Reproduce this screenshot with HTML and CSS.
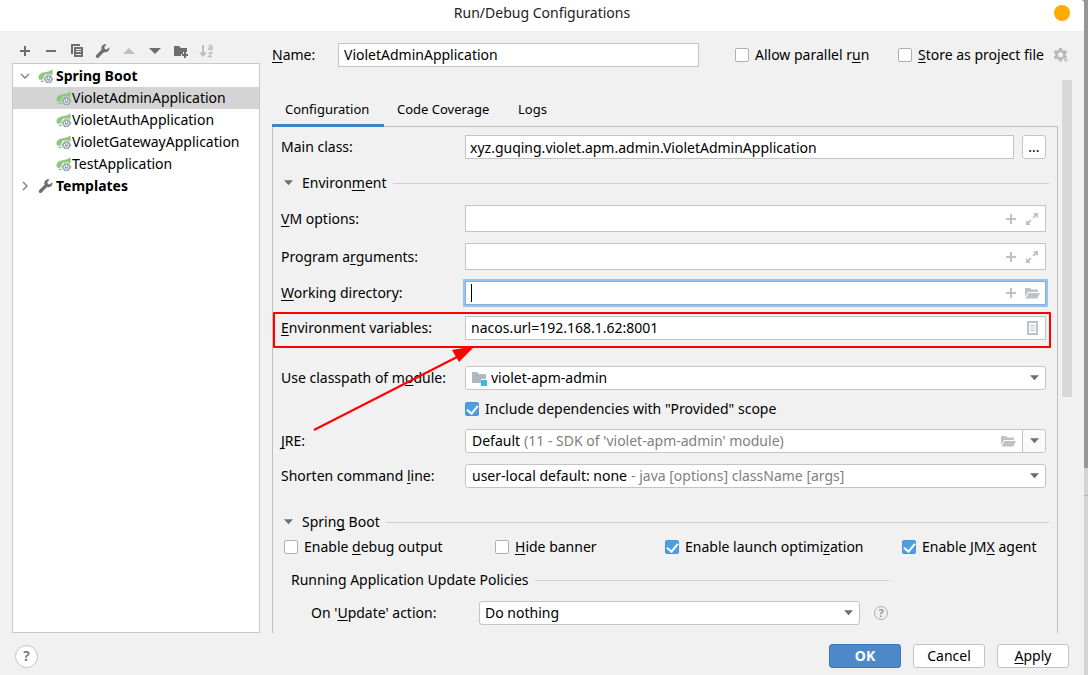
FILE: index.html
```html
<!DOCTYPE html>
<html lang="en">
<head>
<meta charset="utf-8">
<title>Run/Debug Configurations</title>
<link rel="stylesheet" href="styles.css">
</head>
<body>
<svg class="defs" aria-hidden="true">
  <symbol id="i-spring" viewBox="0 0 16 16">
    <path fill="#8cc97c" d="M14.200 1.300C12.800 3 11 3.600 8 3.900 4 4.300.8 5.800.5 9c-.1 1.300.5 2.200 1.200 2.700 1 .3 2.300.2 3-.4L7 6.600h5.800l1.200 1.500c.8-2 .9-4.500.2-6.800z"/>
    <path fill="#8cc97c" d="M2 13c1.200 0 2.200-.3 3-.8l1 1.900c-1.600.3-3 0-4-1.100z"/>
    <path fill="#9aa7b0" d="M8.300 7.200h4.300l2.900 3.900-2.900 3.900H8.300l-2.800-3.900z"/>
    <path d="M9 9.600a2.200 2.200 0 1 0 2.900 0" fill="none" stroke="#fff" stroke-width=".9"/>
    <path d="M10.450 8.600v2.500" stroke="#fff" stroke-width=".9"/>
  </symbol>
  <symbol id="i-wrench" viewBox="0 0 16 16">
    <path fill="#6e6e6e" d="M14.300 4.300l-2.500 2.200-2-.5-.5-2L11.600 1.500C9.800.9 8 1.500 7 2.900c-.8 1.200-.9 2.500-.4 3.800L1.300 12c-.8.800-.7 1.800 0 2.400.7.700 1.700.7 2.400 0L9 9c1.300.5 2.700.3 3.800-.5 1.400-1 2-2.600 1.500-4.200z"/>
  </symbol>
  <symbol id="i-plus" viewBox="0 0 16 16"><path d="M8 3v10M3 8h10" stroke="currentColor" stroke-width="2"/></symbol>
  <symbol id="i-expand" viewBox="0 0 16 16">
    <path fill="currentColor" d="M9 2h5v5l-1.800-1.800-2.400 2.400-1.400-1.400 2.400-2.400zM2 9l1.800 1.800 2.400-2.400 1.400 1.400-2.400 2.400L7 14H2z"/>
  </symbol>
  <symbol id="i-open" viewBox="0 0 16 16">
    <path fill="currentColor" d="M1 3h5l1.500 1.500H14V7H4.200L1 12z"/><path fill="currentColor" d="M4.600 8H16l-2.800 5.500H1.600z"/>
  </symbol>
  <symbol id="i-down" viewBox="0 0 10 6"><path fill="currentColor" d="M0 0h10L5 5.500z"/></symbol>
</svg>
<main class="window">
  <header class="titlebar">
    <h1 class="title">Run/Debug Configurations</h1>
    <button class="close" aria-label="Close"></button>
  </header>
  <div class="content">
    <aside class="sidebar">
      <div class="toolbar">
        <button class="tool" aria-label="Add"><svg viewBox="0 0 16 16"><path d="M8 3v10M3 8h10" stroke="#6e6e6e" stroke-width="2"/></svg></button>
        <button class="tool" aria-label="Remove"><svg viewBox="0 0 16 16"><path d="M3 8h10" stroke="#6e6e6e" stroke-width="2"/></svg></button>
        <button class="tool" aria-label="Copy"><svg viewBox="0 0 16 16"><path fill="#6e6e6e" d="M2 1h9v2H4v8H2z"/><path fill="#6e6e6e" fill-rule="evenodd" d="M5 4h9v10H5zm2 2v1h5V6zm0 2v1h5V8zm0 3v1h5v-1z"/></svg></button>
        <button class="tool" aria-label="Edit templates"><svg><use href="#i-wrench"/></svg></button>
        <button class="tool" aria-label="Move up" disabled><svg viewBox="0 0 16 16"><path fill="#bdbdbd" d="M2 11h12L8 5z"/></svg></button>
        <button class="tool" aria-label="Move down"><svg viewBox="0 0 16 16"><path fill="#6e6e6e" d="M2 5h12l-6 6z"/></svg></button>
        <button class="tool" aria-label="New folder"><svg viewBox="0 0 16 16"><path fill="#6e6e6e" d="M1 3h5l2 2h6v4h-4v2H8v2H1z"/><path d="M12 9v6M9 12h6" stroke="#6e6e6e" stroke-width="2"/></svg></button>
        <button class="tool" aria-label="Sort" disabled><svg viewBox="0 0 16 16"><path d="M4 2v10" stroke="#bdbdbd" stroke-width="2"/><path fill="#bdbdbd" d="M0 9.500h8L4 14z"/><path d="M9.500 3c1-.8 3.500-.8 3.500.8V7m0-2.500c-2 0-3.500.2-3.500 1.300S12.300 7 13 5.800M9.500 9.700h3.300l-3.300 4H13" fill="none" stroke="#bdbdbd" stroke-width="1.300"/></svg></button>
      </div>
      <ul class="tree">
        <li>
          <div class="node group"><svg class="chevron" viewBox="0 0 10 10"><path d="M1 3l4 4 4-4"/></svg><svg class="icon"><use href="#i-spring"/></svg><b>Spring Boot</b></div>
          <ul class="subtree">
            <li class="node leaf selected"><svg class="icon"><use href="#i-spring"/></svg><span>VioletAdminApplication</span></li>
            <li class="node leaf"><svg class="icon"><use href="#i-spring"/></svg><span>VioletAuthApplication</span></li>
            <li class="node leaf"><svg class="icon"><use href="#i-spring"/></svg><span>VioletGatewayApplication</span></li>
            <li class="node leaf"><svg class="icon"><use href="#i-spring"/></svg><span>TestApplication</span></li>
          </ul>
        </li>
        <li class="node group"><svg class="chevron" viewBox="0 0 10 10"><path d="M3 1l4 4-4 4"/></svg><svg class="icon"><use href="#i-wrench"/></svg><b>Templates</b></li>
      </ul>
    </aside>
    <section class="editor">
      <div class="namerow">
        <label class="namelabel" for="name"><u>N</u>ame:</label>
        <input class="field nameinput" id="name" type="text" value="VioletAdminApplication">
        <label class="check parallel"><input type="checkbox"><span>Allow parallel r<u>u</u>n</span></label>
        <label class="check store"><input type="checkbox"><span><u>S</u>tore as project file</span></label>
        <button class="gear" aria-label="Storage options"><svg viewBox="0 0 16 16"><path fill="#b9b9b9" fill-rule="evenodd" d="M6 1h3l.4 2 1.300.7 2-.7 1.500 2.600L12.700 7v1.500l1.500 1.400-1.500 2.600-2-.7-1.300.7L9 14.500H6l-.4-2-1.300-.7-2 .7L.8 9.900l1.500-1.400V7L.8 5.600 2.300 3l2 .7L5.600 3zm1.500 4.200a2.500 2.500 0 1 0 0 5 2.500 2.500 0 0 0 0-5z"/><path fill="#b9b9b9" stroke="#f1f1f1" stroke-width=".8" d="M9.500 12H16l-3.200 3.400z"/></svg></button>
      </div>
      <div class="body">
        <div class="pane">
          <div class="tabs" role="tablist">
            <button class="tab active" role="tab" aria-selected="true">Configuration</button>
            <button class="tab" role="tab">Code Coverage</button>
            <button class="tab" role="tab">Logs</button>
          </div>
          <div class="form">
            <div class="row">
              <label class="lbl" for="mainclass">Main class:</label>
              <input class="field grow mainclass" id="mainclass" type="text" value="xyz.guqing.violet.apm.admin.VioletAdminApplication">
              <button class="browse" aria-label="Browse for class">...</button>
            </div>
            <h2 class="section env"><svg class="fold"><use href="#i-down"/></svg><span>Environ<u>m</u>ent</span></h2>
            <div class="row">
              <label class="lbl" for="vm"><u>V</u>M options:</label>
              <div class="box tall"><input id="vm" type="text"><svg class="act"><use href="#i-plus"/></svg><svg class="act"><use href="#i-expand"/></svg></div>
            </div>
            <div class="row gap">
              <label class="lbl" for="args">Program a<u>r</u>guments:</label>
              <div class="box tall"><input id="args" type="text"><svg class="act"><use href="#i-plus"/></svg><svg class="act"><use href="#i-expand"/></svg></div>
            </div>
            <div class="row gap">
              <label class="lbl" for="dir"><u>W</u>orking directory:</label>
              <div class="box focused"><span class="caret"></span><input id="dir" type="text"><svg class="act"><use href="#i-plus"/></svg><svg class="act"><use href="#i-open"/></svg></div>
            </div>
            <div class="row gap marked">
              <label class="lbl" for="vars"><u>E</u>nvironment variables:</label>
              <div class="box"><input id="vars" type="text" value="nacos.url=192.168.1.62:8001"><svg class="act" viewBox="0 0 16 16"><path fill="currentColor" fill-rule="evenodd" d="M3 1h11v14H3zm2 2v10h7V3z"/><path d="M6 5.500h5M6 8h5M6 10.500h5" stroke="currentColor"/></svg></div>
              <svg class="arrow" viewBox="0 0 164 90"><path d="M1 86L146 12" stroke="#f00" stroke-width="2"/><path fill="#f00" d="M162 2l-23 4 7 12z"/></svg>
            </div>
            <div class="row module">
              <label class="lbl" for="module">Use classpath of m<u>o</u>dule:</label>
              <div class="box combo"><svg class="icon" viewBox="0 0 16 16"><path fill="#aeb9c0" d="M0 2h5l2 2h7v5H9v4H0z"/><path fill="#40b6e0" d="M9 10h6v6H9z"/></svg><select class="grow" id="module"><option>violet-apm-admin</option></select><svg class="drop"><use href="#i-down"/></svg></div>
            </div>
            <div class="row provided"><label class="check"><input type="checkbox" checked><span>Include dependencies with "Provided" scope</span></label></div>
            <div class="row jre">
              <label class="lbl" for="jre"><u>J</u>RE:</label>
              <div class="box combo"><select id="jre"><option>Default</option></select><span class="hint">(11 - SDK of 'violet-apm-admin' module)</span><svg class="act"><use href="#i-open"/></svg><button class="split" aria-label="Show list"><svg class="drop"><use href="#i-down"/></svg></button></div>
            </div>
            <div class="row gap">
              <label class="lbl" for="shorten">Shorten command <u>l</u>ine:</label>
              <div class="box combo"><select id="shorten"><option>user-local default: none</option></select><span class="hint">- java [options] className [args]</span><svg class="drop"><use href="#i-down"/></svg></div>
            </div>
            <h2 class="section boot"><svg class="fold"><use href="#i-down"/></svg><span>Sprin<u>g</u> Boot</span></h2>
            <div class="checks">
              <label class="check"><input type="checkbox"><span>Enable <u>d</u>ebug output</span></label>
              <label class="check"><input type="checkbox"><span><u>H</u>ide banner</span></label>
              <label class="check"><input type="checkbox" checked><span>Enable launch optimi<u>z</u>ation</span></label>
              <label class="check"><input type="checkbox" checked><span>Enable JM<u>X</u> agent</span></label>
            </div>
            <div class="policies">
              <h3 class="section">Running Application Update Policies</h3>
              <div class="row update">
                <label class="lbl" for="update">On '<u>U</u>pdate' action:</label>
                <div class="box combo"><select class="grow" id="update"><option>Do nothing</option></select><svg class="drop"><use href="#i-down"/></svg></div>
                <span class="tip">?</span>
              </div>
            </div>
          </div>
        </div>
        <div class="scroll"></div>
      </div>
    </section>
  </div>
  <footer class="footer">
    <button class="help" aria-label="Help">?</button>
    <button class="btn primary">OK</button>
    <button class="btn">Cancel</button>
    <button class="btn"><span><u>A</u>pply</span></button>
  </footer>
</main>
</body>
</html>
```
FILE: styles.css
```css
* { box-sizing: border-box; }
body {
  margin: 0;
  height: 100vh;
  overflow: hidden;
  font: 14px/22px "Noto Sans", "Open Sans", sans-serif;
  color: #000;
  background: linear-gradient(#979797 0 468px, #d4d4d4 468px 495px, #b8b8b8 495px 496px, #d4d4d4 496px);
}
button, input, select { font: inherit; color: inherit; margin: 0; padding: 0; border: 0; background: none; outline: 0; }
svg { display: block; flex: none; }
u { text-decoration-thickness: 1px; text-underline-offset: 2px; text-decoration-skip-ink: none; }
h1, h2, h3 { margin: 0; font-size: inherit; font-weight: normal; }
ul { list-style: none; margin: 0; padding: 0; }
.defs { position: absolute; width: 0; height: 0; }

.window {
  display: flex;
  flex-direction: column;
  height: 100%;
  margin-right: 4px;
  background: #f1f1f1;
  border-top-right-radius: 4px;
  overflow: hidden;
}
.titlebar { display: grid; grid-template-columns: 1fr auto 1fr; align-items: center; height: 31px; padding: 0 14px 5px 0; background: #fff; flex: none; }
.title { grid-column: 2; padding-left: 14px; color: #222; }
.close { justify-self: end; width: 16px; height: 16px; border-radius: 50%; background: #ffab00; }

.content { display: flex; gap: 12px; flex: 1; min-height: 0; padding-left: 12px; }
.sidebar { display: flex; flex-direction: column; width: 248px; flex: none; }
.toolbar { display: flex; gap: 10px; height: 32px; padding: 12px 0 0 5px; }
.tool, .tool svg { width: 16px; height: 16px; }
.tree { flex: 1; border: 1px solid #c9c9c9; background: #fff; padding-top: 1px; }
.node { display: flex; align-items: center; height: 22px; white-space: nowrap; }
.group { padding-left: 7px; }
.group .icon { margin: 0 2px 0 8px; }
.leaf { padding-left: 43px; }
.selected { background: #d4d4d4; }
.icon { width: 16px; height: 16px; }
.chevron { width: 10px; height: 10px; fill: none; stroke: #7a7a7a; stroke-width: 1.300; }

.editor { display: flex; flex-direction: column; flex: 1; min-width: 0; padding-right: 12px; }
.namerow { display: flex; align-items: center; height: 49px; padding: 0 3px 2px 0; flex: none; white-space: nowrap; }
.namelabel { width: 66px; flex: none; }
.field { height: 24px; border: 1px solid #c4c4c4; background: #fff; padding: 0 5px; min-width: 0; }
.nameinput { flex: 1; }
.mainclass { padding: 0 4px; }
.parallel { width: 139px; margin-left: 36px; }
.store { width: 152px; margin-left: 24px; }
.gear { margin-left: 3px; }
.gear, .gear svg { width: 16px; height: 16px; }

.check { display: flex; align-items: center; gap: 6px; white-space: nowrap; }
.check input { appearance: none; width: 14px; height: 14px; flex: none; border: 1px solid #b0b0b0; border-radius: 2px; background: #fff; display: grid; place-items: center; }
.check input:checked { border-color: #4a94dc; background: #4f9ee3; }
.check input:checked::after { content: ""; width: 5px; height: 9px; margin-bottom: 2px; border: solid #fff; border-width: 0 2px 2px 0; transform: rotate(40deg); }

.body { display: flex; gap: 4px; flex: 1; min-height: 0; }
.pane { display: flex; flex-direction: column; flex: 1; min-width: 0; }
.tabs { display: flex; height: 47px; padding-top: 11px; margin-bottom: -1px; position: relative; flex: none; }
.tab { padding: 0 13px; font-size: 13px; }
.tab.active { min-width: 112px; text-align: left; border-bottom: 3px solid #4083c9; padding-top: 3px; }
.tab:nth-child(2) { min-width: 121px; text-align: left; }
.scroll { width: 10px; height: 317px; background: #d8d8d8; }
.form { flex: 1; min-height: 0; border: solid #bdbdbd; border-width: 1px 1px 0; padding: 8px 11px 0 8px; }

.row { display: flex; align-items: center; white-space: nowrap; }
.lbl { width: 184px; flex: none; }
.gap { margin-top: 11px; }
.grow { flex: 1; min-width: 0; }
.browse { width: 24px; height: 24px; margin-left: 8px; border: 1px solid #c4c4c4; border-radius: 3px; background: #fff; }
.box { display: flex; align-items: center; flex: 1; min-width: 0; height: 24px; padding: 0 5px; border: 1px solid #c4c4c4; background: #fff; }
.box input { flex: 1; min-width: 0; }
.tall { height: 27px; }
.focused { border-color: #87afda; box-shadow: 0 0 0 2px #97c3f3; }
.caret { width: 1px; height: 18px; background: #000; }
.act { width: 16px; height: 16px; margin-left: 5px; color: #bcc2c7; }
.combo { border-radius: 3px; padding: 0 6px; }
.combo select { appearance: none; field-sizing: content; }
.combo .icon { margin-right: 3px; }
.hint { flex: 1; padding-left: 4px; color: #808080; overflow: hidden; }
.drop { width: 9px; height: 6px; color: #6e6e6e; }
.split { display: grid; place-items: center; width: 23px; height: 22px; margin: 0 -6px 0 6px; border-left: 1px solid #c4c4c4; background: #fafafa; border-radius: 0 3px 3px 0; }

.marked { position: relative; }
.marked::after { content: ""; position: absolute; inset: -4px -5px -8px -8px; border: 2px solid #f00; border-radius: 1px; pointer-events: none; }
.arrow { position: absolute; left: 32px; top: 28px; width: 164px; height: 90px; z-index: 1; pointer-events: none; }

.section { display: flex; align-items: center; height: 22px; white-space: nowrap; }
.section::after { content: ""; flex: 1; height: 1px; margin-left: 6px; margin-right: -3px; background: #d0d0d0; }
.fold { width: 9px; height: 6px; margin: 0 9px 0 3px; color: #6e6e6e; }
.env { margin: 13px 0 11px; }
.module { margin-top: 26px; }
.provided { height: 22px; margin-top: 8px; padding-left: 184px; }
.jre { margin-top: 9px; }
.boot { margin-top: 23px; }
.checks { display: grid; grid-template-columns: 211fr 170fr 237fr 144fr; margin: 3px 0 11px 3px; }
.policies { max-width: 608px; padding-left: 10px; }
.policies .section::after { margin-right: 0; }
.update { margin-top: 10px; padding-left: 20px; }
.update .lbl { width: 168px; }
.update .combo { padding-left: 5px; }
.tip { display: grid; place-items: center; width: 14px; height: 14px; margin: 0 1px 0 14px; border: 1px solid #a9b1b7; border-radius: 50%; color: #8f979d; font-size: 11px; line-height: 12px; font-weight: bold; }

.footer { display: flex; align-items: center; gap: 12px; height: 42px; padding: 4px 15px 0; flex: none; }
.help { width: 23px; height: 23px; margin-right: auto; border: 1px solid #c4c4c4; border-radius: 50%; background: #fff; color: #6e6e6e; font-weight: 600; line-height: 20px; }
.btn { width: 72px; height: 24px; border: 1px solid #c4c4c4; border-radius: 3px; background: #fff; }
.primary { border-color: #3f78b8; background: #4d89c9; color: #fff; font-weight: bold; }
```
